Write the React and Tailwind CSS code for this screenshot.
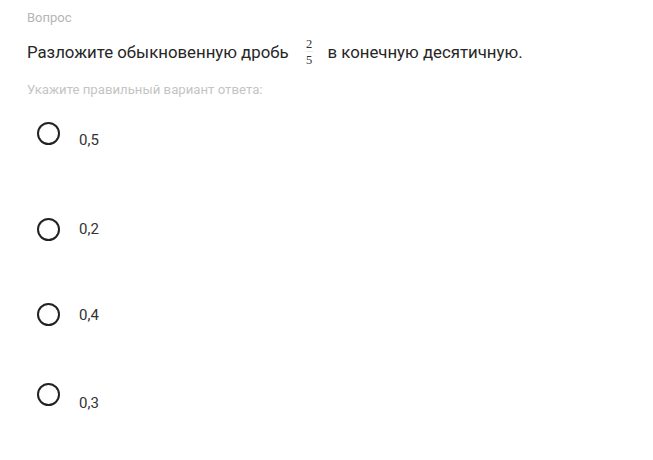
import React from 'react'

const options = [
  { label: '0,5', h: 'h-[96px]', textTop: 'mt-[8px]' },
  { label: '0,2', h: 'h-[85px]', textTop: 'mt-[1px]' },
  { label: '0,4', h: 'h-[80px]', textTop: 'mt-[2px]' },
  { label: '0,3', h: 'h-[77px]', textTop: 'mt-[10px]' },
]

export default function App() {
  return (
    <div className="w-[653px] h-[460px] bg-white overflow-hidden font-['Roboto',sans-serif]">
      <div className="pl-[27px] pt-[10px]">
        {/* Header */}
        <div className="text-[13px] leading-[16px] text-[#b5b5b5]">Вопрос</div>
        <div className="mt-[14px] h-[24px] flex items-center text-[16.8px] leading-[24px] text-[#262626]">
          <span>Разложите обыкновенную дробь</span>
          <span className="inline-flex flex-col items-center ml-[17px] mr-[15px] font-['Liberation_Serif',serif] text-[12.5px] leading-[12px] text-[#333]">
            <span className="pb-[1px]">2</span>
            <span className="w-[7px] h-px bg-[#e6e6e6]"></span>
            <span className="pt-[2px]">5</span>
          </span>
          <span>в конечную десятичную.</span>
        </div>
        <div className="mt-[18px] text-[13.2px] leading-[16px] text-[#c4c4c4]">Укажите правильный вариант ответа:</div>
      </div>

      {/* Options */}
      <div className="mt-[24px] pl-[37px]">
        {options.map((o) => (
          <div key={o.label} className={`flex items-start ${o.h}`}>
            <span className="w-[23px] h-[23px] rounded-full border-[2.5px] border-[#222] shrink-0"></span>
            <span className={`ml-[19px] text-[15px] leading-[20px] text-[#333] ${o.textTop}`}>{o.label}</span>
          </div>
        ))}
      </div>
    </div>
  )
}
